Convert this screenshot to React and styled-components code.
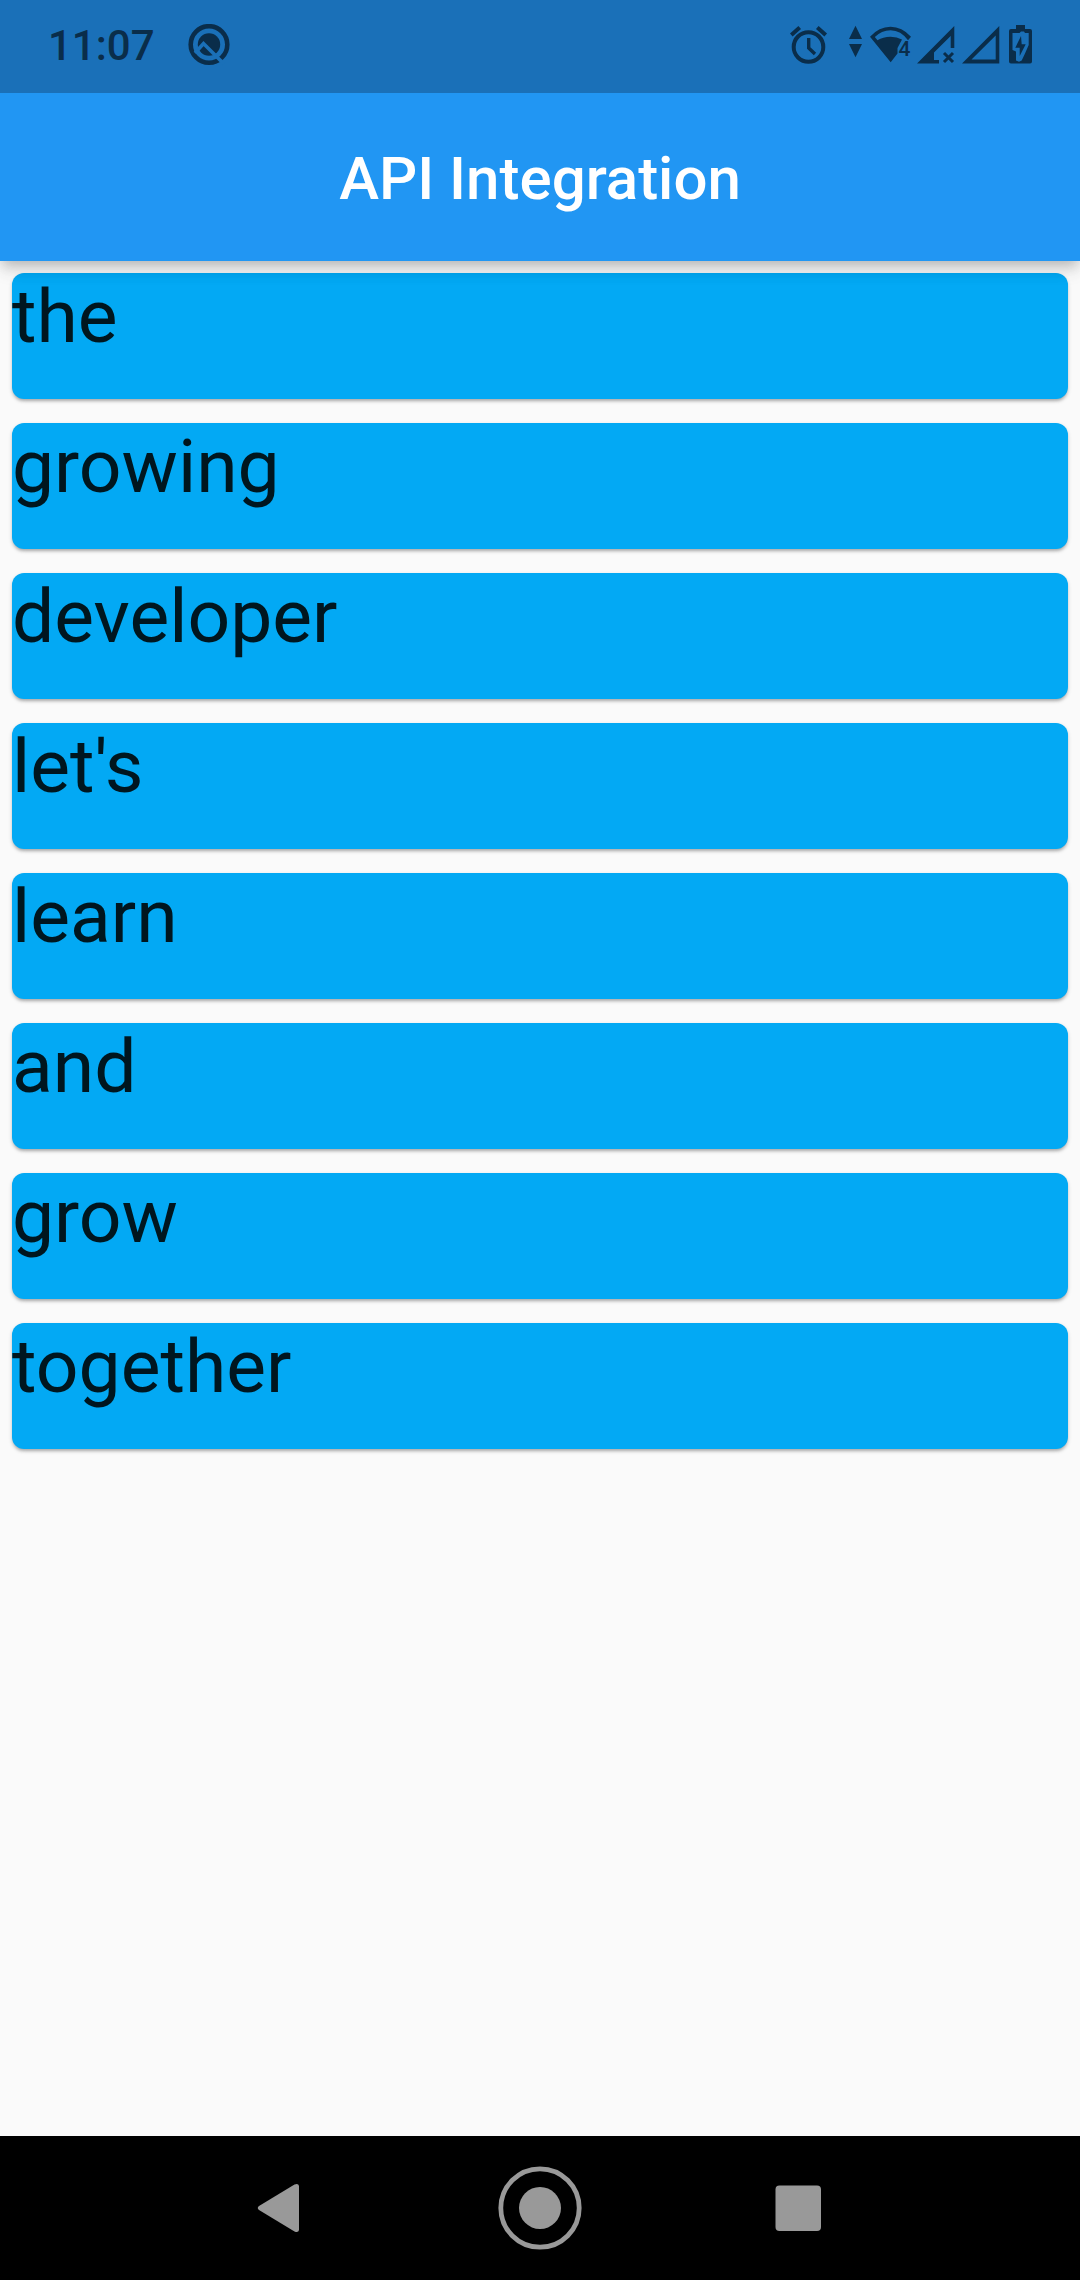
import React from 'react';
import styled, { createGlobalStyle } from 'styled-components';

const INK = '#0a2d4a';
const STATUS_BLUE = '#1a70b8';

const GlobalStyle = createGlobalStyle`
  *, *::before, *::after { box-sizing: border-box; }
  body {
    margin: 0;
    background: #fafafa;
    font-family: Roboto, "Noto Sans", sans-serif;
  }
`;

const Screen = styled.div`
  display: flex;
  flex-direction: column;
  min-height: 100vh;
`;

const StatusBar = styled.div`
  position: relative;
  z-index: 2;
  display: flex;
  align-items: center;
  justify-content: space-between;
  padding: 24px 48px 25px;
  background: ${STATUS_BLUE};
  color: ${INK};
`;

const StatusLeft = styled.div`
  display: flex;
  align-items: center;
  gap: 33px;
`;

const StatusIcons = styled.div`
  display: flex;
  align-items: center;
  gap: 6px;
`;

const Clock = styled.time`
  font-size: 42px;
  line-height: 44px;
  font-weight: 500;
`;

const Glyph = styled.svg`
  display: block;
  flex: none;
  fill: currentColor;
`;

const AppBar = styled.header`
  position: relative;
  z-index: 1;
  padding: 50px 48px 46px;
  background: #2196f3;
  box-shadow: 0 6px 12px -3px rgba(0, 0, 0, 0.2), 0 12px 15px rgba(0, 0, 0, 0.07),
    0 3px 24px rgba(0, 0, 0, 0.06);
`;

const Title = styled.h1`
  margin: 0;
  color: #fff;
  font-size: 60px;
  line-height: 72px;
  font-weight: 500;
  text-align: center;
`;

const WordList = styled.ul`
  flex: 1;
  display: flex;
  flex-direction: column;
  gap: 24px;
  margin: 0;
  padding: 12px;
  list-style: none;
`;

const WordCard = styled.li`
  min-height: 126px;
  border-radius: 12px;
  background: #03a9f4;
  color: #00161f;
  font-size: 75px;
  line-height: 86px;
  box-shadow: 0 3px 3px -1px rgba(0, 0, 0, 0.2), 0 2px 4px rgba(0, 0, 0, 0.16);
`;

const NavBar = styled.nav`
  display: grid;
  grid-template-columns: repeat(3, 1fr);
  justify-items: center;
  padding: 30px 150px;
  background: #000;
`;

const NavButton = styled.button`
  display: block;
  padding: 0;
  border: 0;
  background: none;
  color: #999;
`;

function Icon({ width, height = 44, children }) {
  return (
    <Glyph width={width} height={height} viewBox={`0 0 ${width} ${height}`} aria-hidden="true">
      {children}
    </Glyph>
  );
}

function AndroidQIcon() {
  return (
    <Icon width={42}>
      <circle cx="21" cy="20.5" r="18.3" fill="none" stroke={INK} strokeWidth="4.6" />
      <circle cx="21" cy="20.5" r="11.2" />
      <path d="M7 29 L15.5 19.5 L36 40" fill="none" stroke={STATUS_BLUE} strokeWidth="3.6" />
    </Icon>
  );
}

function AlarmIcon() {
  return (
    <Icon width={53}>
      <g fill="none" stroke={INK} strokeWidth="4">
        <circle cx="18.5" cy="23" r="14.8" />
        <path d="M1.3 11 L9.7 3.6 M35.7 11 L27.3 3.6" />
        <path d="M18.7 14 V24 L25 30" strokeWidth="3.4" />
      </g>
    </Icon>
  );
}

function DataArrowsIcon() {
  return (
    <Icon width={15}>
      <path d="M6.5 1.7 L13 15 H0 Z M0 20 H13 L6.5 33.3 Z" />
    </Icon>
  );
}

function WifiIcon() {
  return (
    <Icon width={41}>
      <path
        fillRule="evenodd"
        d="M0 12.7 Q9 2.7 20.5 2.7 T41 12.7 L38 16.2 Q31 6.4 20.5 6.2 Q11.5 6.4 4.8 13 L7.5 16.2 Q13 12.7 20.5 12.7 Q27 12.7 32 15.5 L27.5 24 V29.5 L20.7 38.3 Z"
      />
      <text x="28.5" y="32" fontSize="21" fontWeight="500">4</text>
    </Icon>
  );
}

function NoSignalIcon() {
  return (
    <Icon width={39}>
      <path d="M0 39.5 L37.3 2 V24 H33.7 V12 L17 28.5 V36 H22 V39.5 Z" />
      <path d="M27 29 L36 38 M36 29 L27 38" fill="none" stroke={INK} strokeWidth="3" />
    </Icon>
  );
}

function SignalIcon() {
  return (
    <Icon width={41}>
      <path fillRule="evenodd" d="M0 39.5 L37.3 2 V39.5 Z M9.5 35.5 H33.7 V11.5 Z" />
    </Icon>
  );
}

function BatteryIcon() {
  return (
    <Icon width={23}>
      <path d="M7 1 H16 V5 H21 Q23 5 23 7 V37.5 Q23 39.5 21 39.5 H2 Q0 39.5 0 37.5 V7 Q0 5 2 5 H7 Z" />
      <path
        fill={STATUS_BLUE}
        d="M3.5 9 H10.5 L12 7.6 H15 L16 9 H19.7 V21 L16 29.5 L12.7 36.5 L10 37.7 L7 36.5 V27.5 L3.5 26 Z"
      />
      <path d="M12 12 L6.3 23.7 H10.7 V32 L16.7 20.3 H12.7 Z" />
    </Icon>
  );
}

const words = ['the', 'growing', 'developer', "let's", 'learn', 'and', 'grow', 'together'];

export default function App() {
  return (
    <Screen>
      <GlobalStyle />
      <StatusBar>
        <StatusLeft>
          <Clock dateTime="11:07">11:07</Clock>
          <AndroidQIcon />
        </StatusLeft>
        <StatusIcons>
          <AlarmIcon />
          <DataArrowsIcon />
          <WifiIcon />
          <NoSignalIcon />
          <SignalIcon />
          <BatteryIcon />
        </StatusIcons>
      </StatusBar>
      <AppBar>
        <Title>API Integration</Title>
      </AppBar>
      <WordList>
        {words.map((word) => (
          <WordCard key={word}>{word}</WordCard>
        ))}
      </WordList>
      <NavBar>
        <NavButton type="button" aria-label="Back">
          <Icon width={84} height={84}>
            <path d="M21 40 L56.5 18.5 Q60.5 17 61 20 V64 Q60.5 67 56.5 65.5 L21 44 Q18.5 42 21 40 Z" />
          </Icon>
        </NavButton>
        <NavButton type="button" aria-label="Home">
          <Icon width={84} height={84}>
            <circle cx="42" cy="42" r="39.2" fill="none" stroke="currentColor" strokeWidth="4.8" />
            <circle cx="42" cy="42" r="21" />
          </Icon>
        </NavButton>
        <NavButton type="button" aria-label="Recent apps">
          <Icon width={84} height={84}>
            <rect x="17.5" y="19.5" width="45.5" height="45.5" rx="4" />
          </Icon>
        </NavButton>
      </NavBar>
    </Screen>
  );
}
